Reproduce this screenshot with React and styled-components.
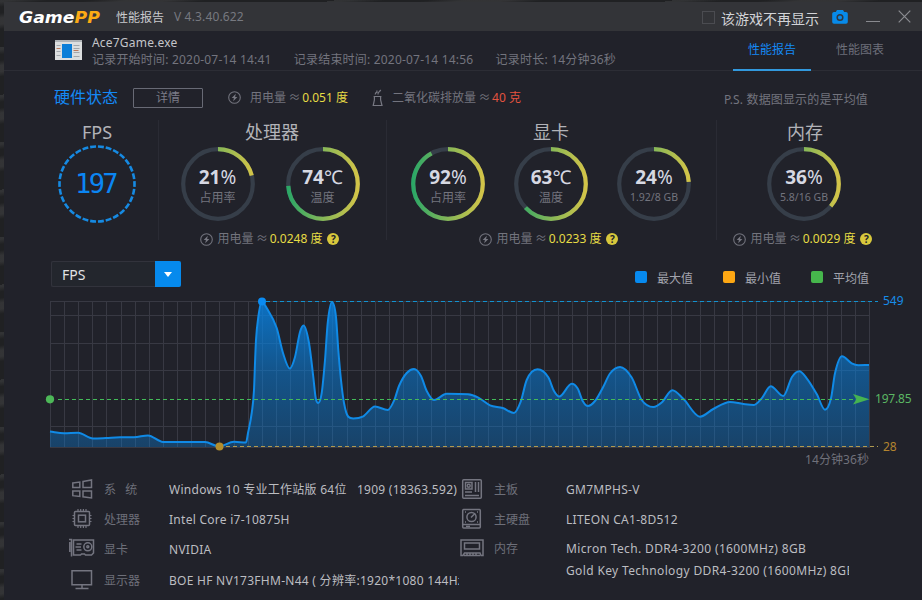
import React from 'react';
import styled, { createGlobalStyle } from 'styled-components';

const GlobalStyle = createGlobalStyle`
  * {
    box-sizing: border-box;
  }

  body {
    margin: 0;
    background: #17181b;
    font-family: "Noto Sans", "Noto Sans CJK SC", sans-serif;
    font-size: 12px;
    overflow: hidden;
  }
`;

const Desktop = styled.div`
  width: 922px;
  height: 600px;
  padding: 2px 0 0 4px;
  background:
    repeating-linear-gradient(172deg, rgba(120, 122, 124, 0.2) 0 2px, transparent 7px 13px, rgba(80, 80, 82, 0.4) 18px 24px, transparent 29px 47px),
    #202123;
`;

const Window = styled.div`
  width: 918px;
  height: 598px;
  background: #21222a;
  color: #73747e;
  overflow: hidden;
`;

const TitleBar = styled.header`
  display: flex;
  align-items: center;
  height: 29px;
  padding: 0 11px 0 15px;
  background: #333438;
`;

const Logo = styled.div`
  width: 97px;
  color: #fff;
  font: italic bold 15px/20px "DejaVu Sans", sans-serif;
  padding-top: 3px;
  transform: scaleX(1.15);
  transform-origin: left;

  span {
    color: #fcaa14;
  }
`;

const AppTitle = styled.div`
  width: 58px;
  color: #c9cace;
`;

const Version = styled.div`
  flex: 1;
  color: #777980;
  letter-spacing: 0.15px;
`;

const HideOption = styled.label`
  display: flex;
  align-items: center;
  gap: 6px;
  margin-right: 13px;
  color: #d2d3d7;
  font-size: 14px;
  line-height: 20px;
  padding-top: 4px;
`;

const CheckBox = styled.span`
  width: 13px;
  height: 13px;
  border: 1px solid #4b4c51;
  margin-top: -2px;
`;

const WindowButtons = styled.div`
  display: flex;
  align-items: center;
  gap: 18px;
`;

const Header = styled.section`
  display: flex;
  height: 40px;
  padding-left: 51px;
  border-bottom: 1px solid #2c2d35;
`;

const GameIcon = styled.svg`
  margin-top: 9px;
  flex: none;
`;

const GameInfo = styled.div`
  flex: 1;
  margin-left: 10px;
  padding-top: 3px;
`;

const GameName = styled.div`
  color: #c4c5c9;
  line-height: 18px;
  letter-spacing: 0.2px;
`;

const MetaRow = styled.div`
  display: flex;
  line-height: 15px;
  letter-spacing: 0.2px;

  span {
    width: 201.8px;
    white-space: nowrap;
  }
`;

const Tabs = styled.nav`
  display: flex;
  gap: 10px;
  padding-right: 23px;
`;

const Tab = styled.div`
  width: 78px;
  height: 40px;
  line-height: 38px;
  text-align: center;
  color: ${({ $active }) => ($active ? '#1489f5' : '#6d6f7a')};
  border-bottom: 2px solid ${({ $active }) => ($active ? '#3299dd' : 'transparent')};
`;

const StatusRow = styled.section`
  display: flex;
  align-items: center;
  height: 49px;
  padding: 4px 54px 0 50px;
`;

const StatusTitle = styled.h2`
  width: 79px;
  margin: 0;
  color: #1489f5;
  font-size: 16px;
  font-weight: 400;
  line-height: 22px;
  padding-bottom: 2px;
`;

const DetailButton = styled.button`
  width: 70px;
  height: 20px;
  margin-right: 25px;
  padding: 0;
  border: 1px solid #686a75;
  border-radius: 1px;
  background: transparent;
  color: #7b7c87;
  font: inherit;
  line-height: 18px;
`;

const Usage = styled.div`
  display: flex;
  align-items: center;
  justify-content: center;
  height: 20px;
  line-height: 20px;
  white-space: pre;
  margin-right: ${({ $gap }) => $gap || 0}px;

  svg {
    flex: none;
    margin-right: ${({ $iconGap }) => $iconGap || 5}px;
  }
`;

const Approx = styled.span`
  letter-spacing: -0.7px;
`;

const UsageValue = styled.span`
  color: ${({ $alert }) => ($alert ? '#e2533f' : '#e6dc45')};
`;

const Help = styled.span`
  width: 12px;
  height: 12px;
  margin-left: 5px;
  border-radius: 50%;
  background: #d8c83c;
  color: #21222a;
  font-size: 10px;
  font-weight: 700;
  line-height: 12px;
  text-align: center;
`;

const Note = styled.div`
  margin-left: auto;
  padding-top: 3px;
  letter-spacing: 0.15px;
`;

const Hardware = styled.section`
  display: grid;
  grid-template-columns: 122px 228px 330px 178px;
  height: 130px;
  margin-left: 32px;
`;

const Device = styled.div`
  position: relative;
  text-align: center;

  & + &::before {
    content: '';
    position: absolute;
    left: 0;
    top: 0;
    width: 1px;
    height: 120px;
    background: #2a2b34;
  }
`;

const DeviceTitle = styled.h3`
  height: 27px;
  margin: 0;
  color: #b2b3b8;
  font-size: 18px;
  font-weight: 400;
  line-height: 24px;
`;

const GaugeRow = styled.div`
  display: flex;
  justify-content: center;
  gap: ${({ $gap }) => $gap}px;
  height: 82px;
  padding-right: ${({ $inset }) => $inset || 0}px;
`;

const GaugeBox = styled.div`
  display: grid;
  width: 74px;
  height: 74px;

  > * {
    grid-area: 1 / 1;
  }
`;

const GaugeText = styled.div`
  padding-top: 18px;
  font-size: ${({ $small }) => ($small ? 10.5 : 12)}px;
  line-height: 17px;
  white-space: nowrap;
`;

const GaugeValue = styled.div`
  height: 24px;
  color: #d6d8e2;
  font-size: 19px;
  line-height: 24px;

  b {
    font-weight: 700;
  }
`;

const FpsBox = styled(GaugeBox)`
  width: 78px;
  height: 78px;
  margin: -2px auto 0;
`;

const FpsValue = styled.div`
  align-self: center;
  color: #0b86f3;
  font: 400 27px/30px "DejaVu Sans Mono", monospace;
  letter-spacing: -2.6px;
  padding-right: 3px;
`;

const ChartBar = styled.section`
  display: flex;
  align-items: center;
  height: 48px;
  padding: 0 53px 0 47px;
`;

const Select = styled.div`
  display: flex;
  width: 130px;
  height: 26px;
  border: 1px solid #32333c;
  border-right: 0;
  border-radius: 2px;
  background: #23262d;
  color: #e2e3e6;
  font-size: 14px;
  line-height: 25px;
  padding-left: 10px;
`;

const SelectArrow = styled.span`
  display: flex;
  align-items: center;
  justify-content: center;
  width: 26px;
  height: 26px;
  margin: -1px 0 0 auto;
  border-radius: 0 2px 2px 0;
  background: #068aed;
`;

const Legend = styled.div`
  display: flex;
  gap: 30px;
  margin-left: auto;
  padding-top: 9px;
`;

const LegendItem = styled.div`
  display: flex;
  align-items: center;
  color: #a2a4ad;
  line-height: 18px;

  &::before {
    content: '';
    width: 12px;
    height: 12px;
    margin: -4px 10px 0 0;
    border-radius: 2px;
    background: ${({ $color }) => $color};
  }
`;

const Chart = styled.svg`
  display: block;
  margin-left: 36px;
  overflow: visible;
  font-family: "Noto Sans", "Noto Sans CJK SC", sans-serif;
`;

const Specs = styled.section`
  display: flex;
  margin-left: 64px;
`;

const SpecColumn = styled.div`
  width: ${({ $width }) => $width}px;
`;

const SpecRow = styled.div`
  display: grid;
  grid-template-columns: ${({ $columns }) => $columns};
  align-items: center;
  height: ${({ $height }) => $height || 30}px;
`;

const SpecIcon = styled.svg`
  display: block;
  fill: none;
  stroke: #747580;
  stroke-width: 1.5;
`;

const SpecLabel = styled.div`
  color: #6d6f79;
  white-space: pre;
`;

const SpecValue = styled.div`
  align-self: ${({ $multi }) => ($multi ? 'start' : 'center')};
  padding-top: ${({ $multi }) => ($multi ? 4 : 2)}px;
  color: #bcbdc1;
  line-height: 22px;
  letter-spacing: ${({ $spacing }) => $spacing || 0.27}px;
  white-space: pre;
  overflow: hidden;
`;

function PowerIcon() {
  return (
    <svg width="13" height="13" viewBox="0 0 13 13">
      <circle cx="6.5" cy="6.5" r="5.8" fill="none" stroke="#71727c" strokeWidth="1.1" />
      <path d="M7.8 2.8 3.7 7h2.2l-.7 3.2L9.4 6H7.1z" fill="#777882" />
    </svg>
  );
}

function ChimneyIcon() {
  return (
    <svg width="11" height="18" viewBox="0 0 11 18" fill="none" stroke="#777882" strokeWidth="1.2">
      <path d="M1.6 7.5h7.8M2.4 7.5V11L1.2 16.5H10L8.6 11V7.5M3.2 5.5q0-2 1.7-2.2V1.5M6 5.5q-.3-2 1.5-3L8.8 1" />
    </svg>
  );
}

function Power({ value }) {
  return (
    <Usage $gap={5}>
      <PowerIcon />
      用电量<Approx> ≈ </Approx><UsageValue>{value} 度</UsageValue>
      <Help>?</Help>
    </Usage>
  );
}

function Gauge({ value, percent, unit = '%', label, small }) {
  const length = 2 * Math.PI * 34.8;

  return (
    <GaugeBox>
      <svg width="74" height="74" viewBox="0 0 74 74" fill="none" strokeWidth="4.2">
        <defs>
          <linearGradient id="ring" gradientUnits="userSpaceOnUse" x1="2" y1="0" x2="72" y2="0">
            <stop offset="0" stopColor="#2ba766" />
            <stop offset="0.5" stopColor="#86b757" />
            <stop offset="1" stopColor="#d3c448" />
          </linearGradient>
        </defs>
        <circle cx="37" cy="37" r="34.8" stroke="#363e49" />
        <path
          d="M37 2.2a34.8 34.8 0 0 1 0 69.6a34.8 34.8 0 0 1 0-69.6"
          stroke="url(#ring)"
          strokeDasharray={`${(length * percent) / 100} ${length}`}
        />
      </svg>
      <GaugeText $small={small}>
        <GaugeValue><b>{value}</b>{unit}</GaugeValue>
        {label}
      </GaugeText>
    </GaugeBox>
  );
}

const samples = [
  [50, 431.5], [64, 433.3], [78, 432.8], [93, 438.5], [106, 438], [120, 437.2], [134, 437.2],
  [148, 435.4], [163, 442], [177, 442], [205, 442], [219, 446.5], [234, 441.8], [246, 442.5],
  [248, 433], [251.7, 413], [254, 390], [255, 363], [256, 340], [258.3, 317], [261.7, 301.5],
  [266.7, 308], [276.7, 328], [283, 353], [289.8, 368.5], [295, 357], [300, 332], [303.6, 325.5],
  [309, 343], [313.3, 377], [315.7, 398], [318.3, 403], [321.7, 393], [325, 360], [327.7, 323],
  [332, 302], [336, 317], [338.3, 350], [341, 380], [344, 403], [348.3, 416.7], [353.3, 418.5],
  [362.7, 416.7], [375, 406.5], [387.7, 410], [394.3, 400], [399, 386], [406.7, 373], [414, 369],
  [421, 376], [426.7, 391], [434, 400], [446.7, 393.8], [468, 394.3], [478.3, 397.6], [490, 405.3],
  [502.7, 408], [514, 413], [520.7, 401.7], [526.7, 380], [537.5, 369.3], [548.3, 377.3],
  [554, 391], [559.3, 396.5], [571.7, 383.7], [577.7, 388.5], [582.7, 401], [588, 406], [595, 401],
  [603.3, 386.7], [610, 373.5], [620, 367], [631.7, 377.5], [641.7, 400], [653.3, 407],
  [661.7, 402.5], [672.3, 390.3], [683.3, 398.8], [700, 416.7], [713.3, 409], [730, 402],
  [743.3, 404], [754, 405], [761.7, 398.3], [770.7, 386.3], [783.3, 396], [792, 377],
  [799.3, 371.3], [806.7, 378.3], [816.7, 394], [825, 409.7], [831, 398.3], [835, 373.3],
  [842, 356.3], [851.7, 363.3], [858.3, 365.2], [869, 365],
];

// Cubic interpolation with flat extremes, so the curve never overshoots a sample
function smoothPath(points) {
  const slopes = points.slice(1).map(([x, y], i) => (y - points[i][1]) / (x - points[i][0]));
  const tangents = points.map((_, i) => {
    if (i === 0) return slopes[0];
    if (i === points.length - 1) return slopes[i - 1];
    const a = slopes[i - 1];
    const b = slopes[i];
    if (a * b <= 0) return 0;
    const limit = 3 * Math.min(Math.abs(a), Math.abs(b));
    return Math.sign(a) * Math.min(Math.abs(a + b) / 2, limit);
  });

  return points.slice(1).reduce((path, [x, y], i) => {
    const [px, py] = points[i];
    const third = (x - px) / 3;
    return `${path}C${px + third} ${py + tangents[i] * third} ${x - third} ${y - tangents[i + 1] * third} ${x} ${y}`;
  }, `M${points[0][0]} ${points[0][1]}`);
}

const curve = smoothPath(samples);
const columns = Array.from({ length: 59 }, (_, i) => Math.round(50 + (i * 819) / 58) + 0.5);
const rows = [301.5, 315.5, 343.5, 370.5, 426.5, 447.5];

function FpsChart() {
  return (
    <Chart width="878" height="176" viewBox="40 298 878 176" fontSize="12">
      <defs>
        <linearGradient id="area" x1="0" y1="0" x2="0" y2="1">
          <stop offset="0" stopColor="#0785e8" stopOpacity="0.8" />
          <stop offset="0.5" stopColor="#0785e8" stopOpacity="0.5" />
          <stop offset="1" stopColor="#0785e8" stopOpacity="0.33" />
        </linearGradient>
      </defs>
      <g stroke="#383943">
        {columns.map((x) => <line key={x} x1={x} x2={x} y1="301" y2="447" />)}
        {rows.map((y) => <line key={y} x1="50" x2="870" y1={y} y2={y} />)}
      </g>
      <path d={`${curve}V447H50Z`} fill="url(#area)" />
      <path d={curve} fill="none" stroke="#108ae6" strokeWidth="2" />
      <g fill="none" strokeWidth="1.2" strokeDasharray="4 3">
        <path d="M266 301.500H878" stroke="#1292d0" />
        <path d="M58 399.500H858" stroke="#43bb58" />
        <path d="M226 446.500H878" stroke="#b09a50" />
      </g>
      <circle cx="262" cy="301.5" r="4" fill="#0b8cf2" />
      <circle cx="50" cy="399.3" r="4.1" fill="#4db858" />
      <circle cx="219.5" cy="446.5" r="4" fill="#b28d2c" />
      <path d="M853 394l16.5 5.3-16.5 5.3 3.5-5.3z" fill="#45b351" />
      <text x="883" y="305" fill="#178ce8">549</text>
      <text x="875" y="403" fill="#5bb663" textLength="36.5">197.85</text>
      <text x="883" y="451" fill="#b3842f">28</text>
      <text x="805" y="464" fill="#70717a" textLength="64">14分钟36秒</text>
    </Chart>
  );
}

const LEFT = '36px 65px 290px';
const RIGHT = '35px 72px 283px';

export default function App() {
  return (
    <Desktop>
      <GlobalStyle />
      <Window>
        <TitleBar>
          <Logo>Game<span>PP</span></Logo>
          <AppTitle>性能报告</AppTitle>
          <Version>V 4.3.40.622</Version>
          <HideOption><CheckBox />该游戏不再显示</HideOption>
          <WindowButtons>
            <svg width="16" height="14" viewBox="0 0 16 14">
              <path d="M5 0h6l1.2 2H14a1.8 1.8 0 0 1 1.8 1.8V12a1.8 1.8 0 0 1-1.8 1.8H2A1.8 1.8 0 0 1 .2 12V3.8A1.8 1.8 0 0 1 2 2h1.8z" fill="#078ae9" />
              <circle cx="8" cy="7.5" r="2.8" fill="none" stroke="#303740" strokeWidth="1.5" />
            </svg>
            <svg width="14" height="14"><path d="M0 11.5h14" stroke="#898a8f" /></svg>
            <svg width="13" height="13"><path d="M.7 .7l11.6 11.6M12.3 .7L.7 12.3" stroke="#8b8c91" strokeWidth="1.2" /></svg>
          </WindowButtons>
        </TitleBar>

        <Header>
          <GameIcon width="27" height="20" viewBox="0 0 27 20">
            <path fill="#dcdedf" d="M0 0h27v20H0z" />
            <path fill="#aeb2b6" d="M0 0h27v2H0z" />
            <path fill="#0b7ed8" d="M7 4h10v14H7z" />
            <path stroke="#a2a7ac" d="M1.5 5.5h4M1.5 11.5h4M1.5 15.5h4M18.5 5.5h6M18.5 8.5h6M18.5 12.5h6M18.5 16.5h6" />
            <path stroke="#bb795c" d="M1.5 8.5h4M18.5 10.5h5" />
          </GameIcon>
          <GameInfo>
            <GameName>Ace7Game.exe</GameName>
            <MetaRow>
              <span>记录开始时间: 2020-07-14 14:41</span>
              <span>记录结束时间: 2020-07-14 14:56</span>
              <span>记录时长: 14分钟36秒</span>
            </MetaRow>
          </GameInfo>
          <Tabs>
            <Tab $active>性能报告</Tab>
            <Tab>性能图表</Tab>
          </Tabs>
        </Header>

        <StatusRow>
          <StatusTitle>硬件状态</StatusTitle>
          <DetailButton>详情</DetailButton>
          <Usage $gap={24.5} $iconGap={9}>
            <PowerIcon />
            用电量<Approx> ≈ </Approx><UsageValue>0.051 度</UsageValue>
          </Usage>
          <Usage $iconGap={8.5}>
            <ChimneyIcon />
            二氧化碳排放量<Approx> ≈ </Approx><UsageValue $alert>40 克</UsageValue>
          </Usage>
          <Note>P.S. 数据图显示的是平均值</Note>
        </StatusRow>

        <Hardware>
          <Device>
            <DeviceTitle>FPS</DeviceTitle>
            <FpsBox>
              <svg width="78" height="78" viewBox="0 0 78 78">
                <circle cx="39" cy="39" r="37.5" pathLength="240" fill="none" stroke="#168ae2" strokeWidth="2.6" strokeDasharray="6 2" strokeDashoffset="3" />
              </svg>
              <FpsValue>197</FpsValue>
            </FpsBox>
          </Device>
          <Device>
            <DeviceTitle>处理器</DeviceTitle>
            <GaugeRow $gap={31} $inset={4}>
              <Gauge value="21" percent={21} label="占用率" />
              <Gauge value="74" unit="℃" percent={74} label="温度" />
            </GaugeRow>
            <Power value="0.0248" />
          </Device>
          <Device>
            <DeviceTitle>显卡</DeviceTitle>
            <GaugeRow $gap={29}>
              <Gauge value="92" percent={92} label="占用率" />
              <Gauge value="63" unit="℃" percent={63} label="温度" />
              <Gauge value="24" percent={24} label="1.92/8 GB" small />
            </GaugeRow>
            <Power value="0.0233" />
          </Device>
          <Device>
            <DeviceTitle>内存</DeviceTitle>
            <GaugeRow $inset={2}>
              <Gauge value="36" percent={36} label="5.8/16 GB" small />
            </GaugeRow>
            <Power value="0.0029" />
          </Device>
        </Hardware>

        <ChartBar>
          <Select>
            FPS
            <SelectArrow>
              <svg width="8" height="5"><path d="M0 0h8L4 5z" fill="#fff" /></svg>
            </SelectArrow>
          </Select>
          <Legend>
            <LegendItem $color="#078aef">最大值</LegendItem>
            <LegendItem $color="#fda713">最小值</LegendItem>
            <LegendItem $color="#46b64c">平均值</LegendItem>
          </Legend>
        </ChartBar>

        <FpsChart />

        <Specs>
          <SpecColumn $width={391}>
            <SpecRow $columns={LEFT}>
              <SpecIcon width="28" height="22" viewBox="0 0 28 22">
                <path d="M4.8 5l7-1v5.5h-7zM15 3.5L23.5 2v7.5H15zM4.8 13h7v5.5l-7-.8zM15 13h8.5v7L15 18.8z" />
              </SpecIcon>
              <SpecLabel>系   统</SpecLabel>
              <SpecValue>Windows 10 专业工作站版 64位   1909 (18363.592)</SpecValue>
            </SpecRow>
            <SpecRow $columns={LEFT}>
              <SpecIcon width="28" height="22" viewBox="0 0 28 22">
                <rect x="6.5" y="3.5" width="15" height="14" rx="1" />
                <rect x="10.5" y="7.2" width="7" height="6.6" />
                <path d="M10 3V1M12.7 3V1M15.4 3V1M18 3V1M10 18v2M12.7 18v2M15.4 18v2M18 18v2M6 7.5H4.5M6 10.5H4.5M6 13.5H4.5M22 7.5h1.5M22 10.5h1.5M22 13.5h1.5" strokeWidth="1.2" />
              </SpecIcon>
              <SpecLabel>处理器</SpecLabel>
              <SpecValue>Intel Core i7-10875H</SpecValue>
            </SpecRow>
            <SpecRow $columns={LEFT}>
              <SpecIcon width="28" height="22" viewBox="0 0 28 22">
                <path d="M1 1.5h2.5v17M1.8 4v10M5.500 2h20v13l-2 2h-6l-1-1h-3l-1 1h-7zM8.500 6h5M7.500 9h5.500M8.500 12h5" />
                <circle cx="19.8" cy="8.8" r="4" />
                <circle cx="19.8" cy="8.8" r="1" />
              </SpecIcon>
              <SpecLabel>显卡</SpecLabel>
              <SpecValue>NVIDIA</SpecValue>
            </SpecRow>
            <SpecRow $columns={LEFT} $height={32}>
              <SpecIcon width="28" height="22" viewBox="0 0 28 22">
                <path d="M4 1.8h19.5v14H4zM14 16v3.5M7.5 19.5h13" />
              </SpecIcon>
              <SpecLabel>显示器</SpecLabel>
              <SpecValue>BOE HF NV173FHM-N44 ( 分辨率:1920*1080 144Hz )</SpecValue>
            </SpecRow>
          </SpecColumn>
          <SpecColumn $width={390}>
            <SpecRow $columns={RIGHT}>
              <SpecIcon width="26" height="22" viewBox="0 0 26 22">
                <rect x="3.7" y="1.7" width="18.6" height="18.6" rx="1" />
                <path d="M6.5 4.5H13V11H6.5zM16.5 4v10M19.5 4v10M6 14h7M6 17.5h14" />
                <circle cx="9.7" cy="7.7" r="1.5" />
              </SpecIcon>
              <SpecLabel>主板</SpecLabel>
              <SpecValue>GM7MPHS-V</SpecValue>
            </SpecRow>
            <SpecRow $columns={RIGHT}>
              <SpecIcon width="26" height="22" viewBox="0 0 26 22">
                <rect x="3.7" y="1.5" width="17.6" height="18.5" rx="1" />
                <path d="M4 16.5h17M12 9.5l4-4M7 18.5h4" />
                <circle cx="12.5" cy="9" r="4.6" />
                <path d="M6 4h1M18 4h1M6 14h1M18 14h1" />
              </SpecIcon>
              <SpecLabel>主硬盘</SpecLabel>
              <SpecValue>LITEON CA1-8D512</SpecValue>
            </SpecRow>
            <SpecRow $columns={RIGHT} $height={27}>
              <SpecIcon width="26" height="22" viewBox="0 0 26 22">
                <path d="M4 18.5H2V3h22v15.5h-2L21 16H5.5zM5.5 6h15v6h-15zM8 18.5v-2M11 18.5v-2M14 18.5v-2M17 18.5v-2M5 18.5h16" />
              </SpecIcon>
              <SpecLabel>内存</SpecLabel>
              <SpecValue $multi $spacing={0.36}>
                {'Micron Tech. DDR4-3200 (1600MHz) 8GB\nGold Key Technology DDR4-3200 (1600MHz) 8GB'}
              </SpecValue>
            </SpecRow>
          </SpecColumn>
        </Specs>
      </Window>
    </Desktop>
  );
}
